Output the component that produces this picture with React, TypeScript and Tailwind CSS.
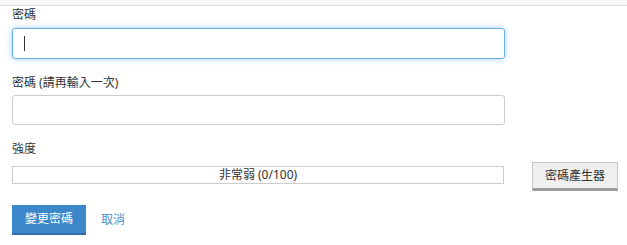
import React from "react";

export default function App() {
  return (
    <div
      className="w-[627px] h-[245px] bg-white text-[#333] text-[12px] overflow-hidden"
      style={{ fontFamily: '"Noto Sans", "Noto Sans CJK TC", sans-serif' }}
    >
      <div className="h-[6px] bg-[#f7f7f7] border-b border-[#dddddd]" />
      <div className="pl-3">
        <div className="h-[18px] leading-[18px] mb-[4px]">密碼</div>
        <div className="w-[493px] h-[31px] rounded-[3px] border border-[#66afe9] shadow-[0_0_6px_rgba(102,175,233,0.6)] flex items-center pl-[11px]">
          <span className="w-px h-[15px] bg-[#333]" />
        </div>

        <div className="h-[18px] leading-[18px] mt-[15px] mb-[3px]">密碼 (請再輸入一次)</div>
        <div className="w-[493px] h-[30px] rounded-[3px] border border-[#cccccc]" />

        <div className="h-[18px] leading-[18px] mt-[15px] mb-[4px]">強度</div>
        <div className="flex items-start gap-[28px]">
          <div className="mt-[4px] w-[492px] h-[18px] border border-[#cccccc] flex items-center justify-center leading-none">
            非常弱 (0/100)
          </div>
          <button className="w-[86px] h-[29px] bg-[#efefef] border border-[#c6c6c6] border-b-[3px] border-b-[#9d9d9d] text-[#333] text-[12px] leading-none">
            密碼產生器
          </button>
        </div>

        <div className="flex items-center mt-[14px]">
          <button className="w-[74px] h-[30px] bg-[#3b87c9] border-b-2 border-b-[#2f6ea6] text-white text-[12px] leading-none">
            變更密碼
          </button>
          <span className="ml-[15px] text-[#4a8fcb]">取消</span>
        </div>
      </div>
    </div>
  );
}
